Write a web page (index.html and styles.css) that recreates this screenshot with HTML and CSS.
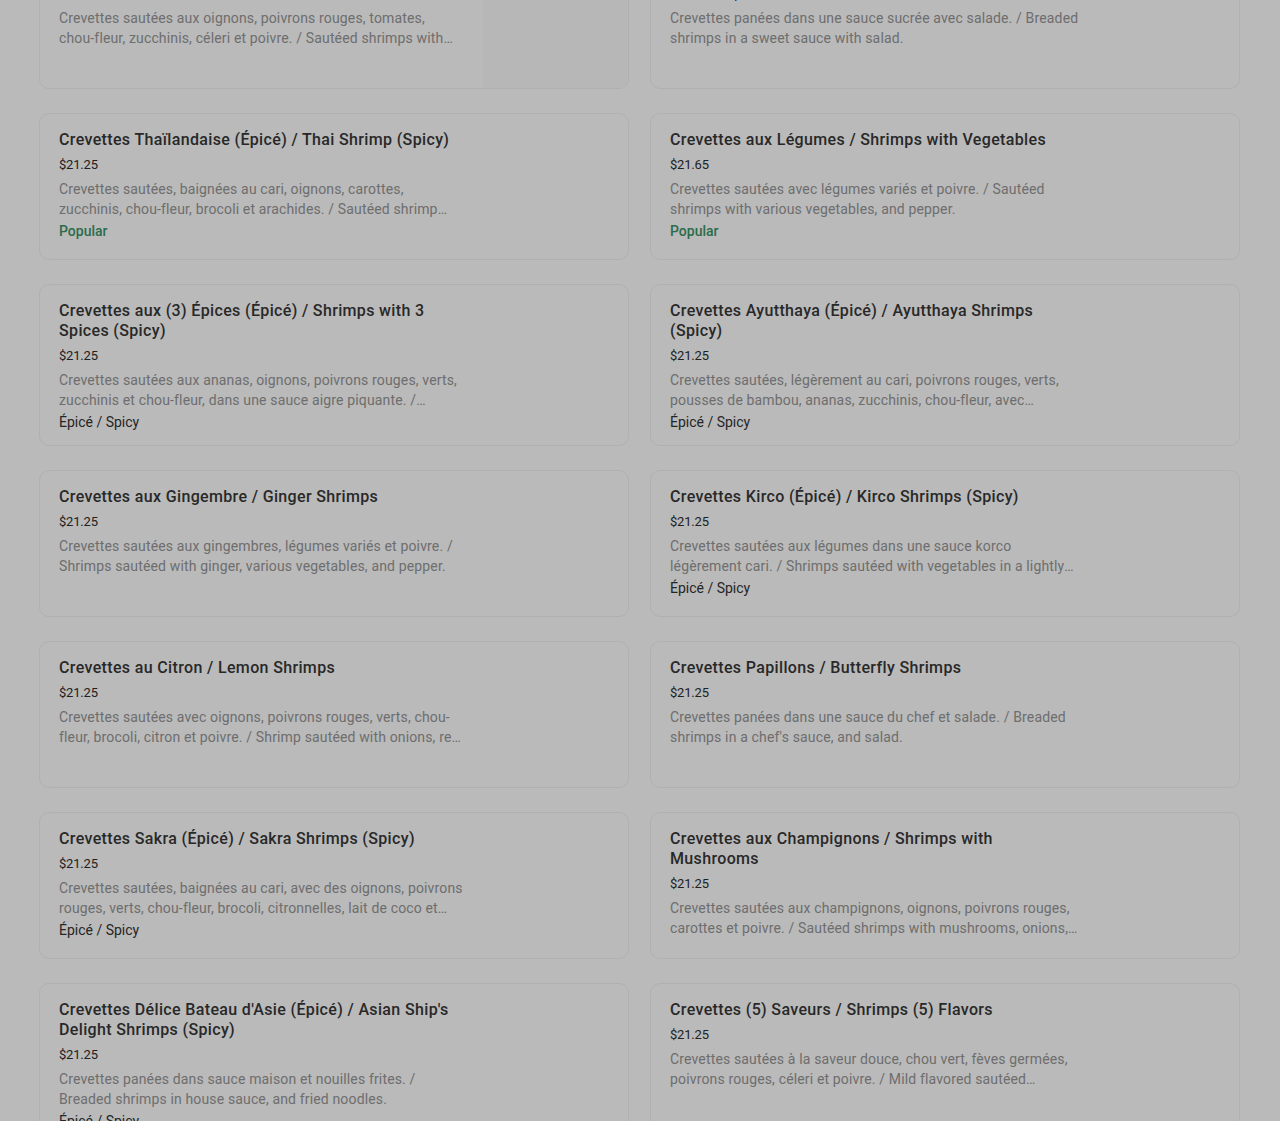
FILE: index.html
```html
<!DOCTYPE html>
<html lang="fr">
<head>
    <meta charset="UTF-8">
    <meta name="viewport" content="width=device-width, initial-scale=1.0">
    <title>Crevettes / Shrimps</title>
    <link rel="stylesheet" href="styles.css">
</head>
<body>
    <ul class="menu">
        <li class="item">
            <div class="item-text">
                <h3>Crevettes Szechuan (Épicé) / Szechuan Shrimps</h3>
                <div class="price">$21.25</div>
                <p class="desc">Crevettes sautées aux oignons, poivrons rouges, tomates, chou-fleur, zucchinis, céleri et poivre. / Sautéed shrimps with onions, red peppers, tomatoes, cauliflower, zucchinis, celery and pepper.</p>
            </div>
            <div class="item-photo"></div>
        </li>
        <li class="item">
            <div class="item-text">
                <h3>Crevettes Sucrées / Sweet Shrimps</h3>
                <div class="price">$21.25 • Populaire</div>
                <p class="desc">Crevettes panées dans une sauce sucrée avec salade. / Breaded shrimps in a sweet sauce with salad.</p>
            </div>
        </li>

        <li class="item">
            <div class="item-text">
                <h3>Crevettes Thaïlandaise (Épicé) / Thai Shrimp (Spicy)</h3>
                <div class="price">$21.25</div>
                <p class="desc">Crevettes sautées, baignées au cari, oignons, carottes, zucchinis, chou-fleur, brocoli et arachides. / Sautéed shrimp bathed in curry, onions, carrots, zucchinis, cauliflower, broccoli and peanuts.</p>
                <div class="tag popular">Popular</div>
            </div>
        </li>
        <li class="item">
            <div class="item-text">
                <h3>Crevettes aux Légumes / Shrimps with Vegetables</h3>
                <div class="price">$21.65</div>
                <p class="desc">Crevettes sautées avec légumes variés et poivre. / Sautéed shrimps with various vegetables, and pepper.</p>
                <div class="tag popular">Popular</div>
            </div>
        </li>

        <li class="item">
            <div class="item-text">
                <h3>Crevettes aux (3) Épices (Épicé) / Shrimps with 3 Spices (Spicy)</h3>
                <div class="price">$21.25</div>
                <p class="desc">Crevettes sautées aux ananas, oignons, poivrons rouges, verts, zucchinis et chou-fleur, dans une sauce aigre piquante. / Sautéed shrimps with pineapple, onions, red and green peppers, zucchinis and cauliflower.</p>
                <div class="tag">Épicé / Spicy</div>
            </div>
        </li>
        <li class="item">
            <div class="item-text">
                <h3>Crevettes Ayutthaya (Épicé) / Ayutthaya Shrimps (Spicy)</h3>
                <div class="price">$21.25</div>
                <p class="desc">Crevettes sautées, légèrement au cari, poivrons rouges, verts, pousses de bambou, ananas, zucchinis, chou-fleur, avec citronnelles. / Sautéed shrimps, lightly curried, with red and green peppers.</p>
                <div class="tag">Épicé / Spicy</div>
            </div>
        </li>

        <li class="item">
            <div class="item-text">
                <h3>Crevettes aux Gingembre / Ginger Shrimps</h3>
                <div class="price">$21.25</div>
                <p class="desc">Crevettes sautées aux gingembres, légumes variés et poivre. / Shrimps sautéed with ginger, various vegetables, and pepper.</p>
            </div>
        </li>
        <li class="item">
            <div class="item-text">
                <h3>Crevettes Kirco (Épicé) / Kirco Shrimps (Spicy)</h3>
                <div class="price">$21.25</div>
                <p class="desc">Crevettes sautées aux légumes dans une sauce korco légèrement cari. / Shrimps sautéed with vegetables in a lightly curried korco sauce.</p>
                <div class="tag">Épicé / Spicy</div>
            </div>
        </li>

        <li class="item">
            <div class="item-text">
                <h3>Crevettes au Citron / Lemon Shrimps</h3>
                <div class="price">$21.25</div>
                <p class="desc">Crevettes sautées avec oignons, poivrons rouges, verts, chou-fleur, brocoli, citron et poivre. / Shrimp sautéed with onions, red and green peppers, cauliflower, broccoli, lemon and pepper.</p>
            </div>
        </li>
        <li class="item">
            <div class="item-text">
                <h3>Crevettes Papillons / Butterfly Shrimps</h3>
                <div class="price">$21.25</div>
                <p class="desc">Crevettes panées dans une sauce du chef et salade. / Breaded shrimps in a chef's sauce, and salad.</p>
            </div>
        </li>

        <li class="item">
            <div class="item-text">
                <h3>Crevettes Sakra (Épicé) / Sakra Shrimps (Spicy)</h3>
                <div class="price">$21.25</div>
                <p class="desc">Crevettes sautées, baignées au cari, avec des oignons, poivrons rouges, verts, chou-fleur, brocoli, citronnelles, lait de coco et arachides. / Sautéed shrimps bathed in curry.</p>
                <div class="tag">Épicé / Spicy</div>
            </div>
        </li>
        <li class="item">
            <div class="item-text">
                <h3>Crevettes aux Champignons / Shrimps with Mushrooms</h3>
                <div class="price">$21.25</div>
                <p class="desc">Crevettes sautées aux champignons, oignons, poivrons rouges, carottes et poivre. / Sautéed shrimps with mushrooms, onions, red peppers, carrots and pepper.</p>
            </div>
        </li>

        <li class="item">
            <div class="item-text">
                <h3>Crevettes Délice Bateau d'Asie (Épicé) / Asian Ship's Delight Shrimps (Spicy)</h3>
                <div class="price">$21.25</div>
                <p class="desc">Crevettes panées dans sauce maison et nouilles frites. / Breaded shrimps in house sauce, and fried noodles.</p>
                <div class="tag">Épicé / Spicy</div>
            </div>
        </li>
        <li class="item">
            <div class="item-text">
                <h3>Crevettes (5) Saveurs / Shrimps (5) Flavors</h3>
                <div class="price">$21.25</div>
                <p class="desc">Crevettes sautées à la saveur douce, chou vert, fèves germées, poivrons rouges, céleri et poivre. / Mild flavored sautéed shrimps with cabbage, bean sprouts, red peppers, celery and pepper.</p>
            </div>
        </li>
    </ul>

    <div class="backdrop"></div>
</body>
</html>
```

FILE: styles.css
```css
body {
    margin: 0;
    background-color: #fff;
    font-family: Roboto, "Liberation Sans", sans-serif;
    color: #000;
    overflow: hidden;
}
.menu {
    list-style: none;
    margin: -58px 0 0 39px;
    padding: 0;
    width: 1201px;
    display: grid;
    grid-template-columns: 1fr 1fr;
    column-gap: 21px;
    row-gap: 24px;
}
.item {
    display: flex;
    justify-content: space-between;
    min-height: 147px;
    box-sizing: border-box;
    padding: 16px 0 13px 19px;
    border: 1px solid #f2f2f2;
    border-radius: 10px;
}
.item-text {
    width: 404px;
}
.item:nth-child(even) .item-text {
    width: 411px;
}
.item-photo {
    width: 145px;
    margin: -16px 0 -13px;
    background-color: #fbfbfb;
    border-radius: 0 10px 10px 0;
}
h3 {
    margin: 0;
    font-size: 16px;
    font-weight: 500;
    line-height: 20px;
    letter-spacing: 0.35px;
    color: #383838;
}
.price {
    margin-top: 5px;
    font-size: 13px;
    line-height: 20px;
    letter-spacing: -0.2px;
    color: #2e2e2e;
}
.desc {
    margin: 4px 0 0;
    font-size: 14px;
    line-height: 20px;
    letter-spacing: 0.15px;
    color: #979797;
    display: -webkit-box;
    -webkit-line-clamp: 2;
    -webkit-box-orient: vertical;
    overflow: hidden;
}
.tag {
    margin-top: 2px;
    font-size: 14px;
    line-height: 20px;
    color: #333;
}
.popular {
    font-weight: 500;
    color: #3b9468;
}
.backdrop {
    position: fixed;
    inset: 0;
    background-color: rgba(0, 0, 0, 0.27);
}
```
